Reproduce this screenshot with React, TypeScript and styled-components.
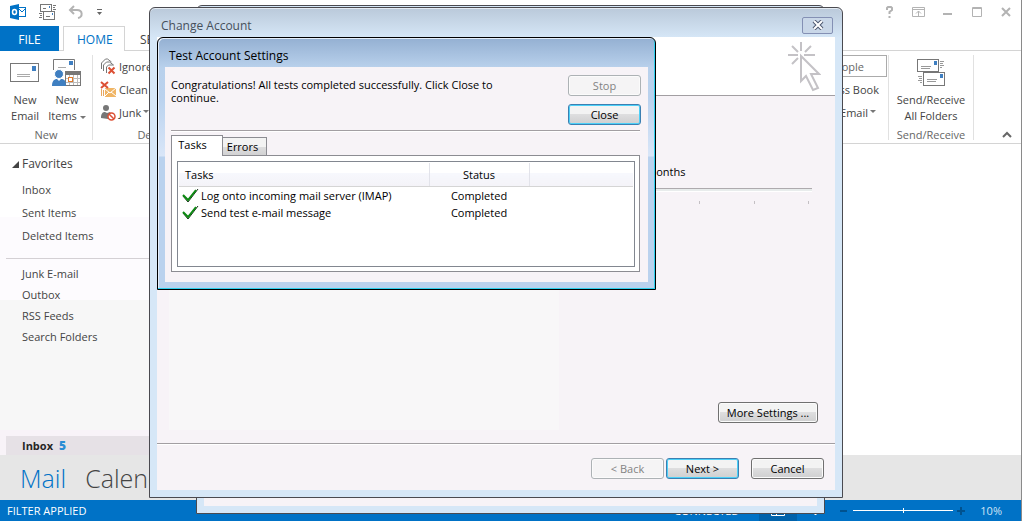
import React from "react";
import styled, { createGlobalStyle, css } from "styled-components";

const BLUE = "#0072c6";
const INK = "#444444";

const Global = createGlobalStyle`
  *, *::before, *::after { box-sizing: border-box; }
  body { margin: 0; background: #fff; }
  body, button, input, table { font-family: "Open Sans", "Noto Sans", sans-serif; font-size: 11px; color: ${INK}; }
  button { padding: 0; border: 0; background: none; }
  svg { display: block; flex: none; }
`;

/* ---------- main window ---------- */
const Page = styled.div`
  position: relative;
  display: flex;
  flex-direction: column;
  min-height: 100vh;
  overflow: hidden;
  background: #fff;
  border-right: 1px solid #8a8a8a;
`;
const TitleBar = styled.header`
  display: flex;
  justify-content: space-between;
  height: 26px;
  padding: 0 8px 2px 9px;
`;
const QuickTools = styled.div`
  display: flex;
  align-items: center;
  gap: 12px;
`;
const WindowTools = styled(QuickTools)`
  gap: 14px;
`;
const IconButton = styled.button`
  display: flex;
  align-items: center;
  justify-content: center;
`;
const Tabs = styled.nav`
  display: flex;
  height: 25px;
  border-bottom: 1px solid #d4d4d4;
`;
const Tab = styled.button<{ $kind?: "file" | "active" }>`
  height: 25px;
  padding: 0 13px;
  font-size: 12px;
  white-space: nowrap;
  border: 1px solid transparent;
  border-bottom: 0;
  ${(p) => p.$kind === "file" && css`
    width: 59px;
    margin-right: 4px;
    color: #fff;
    background: ${BLUE};
  `}
  ${(p) => p.$kind === "active" && css`
    width: 62px;
    margin-right: 1px;
    color: ${BLUE};
    background: #fff;
    border-color: #d4d4d4;
  `}
`;
const Ribbon = styled.div`
  display: flex;
  height: 93px;
  padding: 4px 0 3px;
  border-bottom: 1px solid #d4d4d4;
`;
const Group = styled.section<{ $width: number }>`
  display: flex;
  flex-direction: column;
  justify-content: space-between;
  width: ${(p) => p.$width}px;
  border-right: 1px solid #e1e1e1;
`;
const GroupBody = styled.div`
  display: flex;
  padding: 0 4px;
`;
const GroupName = styled.div`
  line-height: 10px;
  text-align: center;
  color: #666;
`;
const BigButton = styled.button`
  display: flex;
  flex-direction: column;
  align-items: center;
  flex: 1;
  gap: 2px;
  line-height: 16px;
  white-space: nowrap;
  padding-top: 3px;
`;
const SmallStack = styled.div<{ $right?: boolean }>`
  display: flex;
  flex-direction: column;
  align-items: ${(p) => (p.$right ? "flex-end" : "flex-start")};
  flex: 1;
  gap: 1px;
  padding: 0 ${(p) => (p.$right ? 8 : 3)}px;
`;
const SmallButton = styled.button`
  display: flex;
  align-items: center;
  gap: 2px;
  height: 22px;
  white-space: nowrap;
`;
const EmailButton = styled(SmallButton)`
  margin-right: 3px;
`;
const SearchBox = styled.input`
  width: 116px;
  height: 22px;
  margin-right: -8px;
  padding: 0 22px 0 4px;
  text-align: right;
  color: #666;
  border: 1px solid #ababab;
  &::placeholder { color: #666; }
`;
const Spacer = styled.div`
  flex: 1;
`;
const RibbonEnd = styled.div`
  display: flex;
  align-items: flex-end;
  justify-content: flex-end;
  width: 47px;
  padding: 0 9px 2px 0;
`;
const Main = styled.main`
  display: flex;
  flex: 1;
`;
const Sidebar = styled.aside`
  display: flex;
  flex-direction: column;
  width: 190px;
  background: linear-gradient(#fff 73px, #fdfbfe 73px, #fdfbfe 156px, #f7f7f7 156px, #f7f7f7 286px, #f8f3f8 286px);
`;
const Favorites = styled.h2`
  display: flex;
  align-items: center;
  gap: 3px;
  margin: 0;
  padding: 10px 12px 4px;
  font-size: 12px;
  line-height: 20px;
  font-weight: 400;
`;
const Folders = styled.ul<{ $row: number }>`
  margin: 0;
  padding: 0 0 0 22px;
  list-style: none;
  line-height: ${(p) => p.$row}px;
`;
const FolderLink = styled.a`
  color: ${INK};
  text-decoration: none;
`;
const Rule = styled.hr`
  width: auto;
  margin: 11px 0 4px 6px;
  border: 0;
  border-top: 1px solid #d4d0d4;
`;
const Selected = styled.a`
  display: flex;
  gap: 6px;
  margin: auto 0 0 6px;
  padding-left: 16px;
  line-height: 19px;
  font-weight: 700;
  color: #262626;
  background: #e6e1e6;
  text-decoration: none;
  b { color: #2a8dd4; font-size: 12px; }
`;
const Modules = styled.nav`
  display: flex;
  gap: 19px;
  height: 45px;
  padding-left: 20px;
  background: #e6e6e6;
`;
const Module = styled.a<{ $on?: boolean }>`
  font-size: 25px;
  line-height: 47px;
  font-weight: 300;
  color: ${(p) => (p.$on ? BLUE : INK)};
  text-decoration: none;
`;
const StatusBar = styled.footer`
  display: flex;
  align-items: center;
  height: 21px;
  padding: 0 19px 0 7px;
  color: #fff;
  background: ${BLUE};
`;
const StatusView = styled.button<{ $on?: boolean }>`
  display: flex;
  align-items: center;
  justify-content: center;
  width: 38px;
  height: 21px;
  background: ${(p) => (p.$on ? "#0062ab" : "transparent")};
`;
const Connected = styled.span`
  margin-right: 20px;
`;
const Percent = styled.span`
  margin-left: 14px;
  color: #cfe4f5;
`;
const ZoomRange = styled.input`
  appearance: none;
  width: 100px;
  height: 9px;
  margin: 0 4px;
  background: linear-gradient(#fff, #fff) center / 100% 1px no-repeat;
  &::-webkit-slider-thumb { appearance: none; width: 1px; height: 5px; background: #fff; }
`;

/* ---------- dialogs ---------- */
const BackWindow = styled.div`
  position: absolute;
  top: 5px;
  bottom: 7px;
  left: 196px;
  right: 196px;
  border: 1px solid #4a4a50;
  border-radius: 6px 6px 0 0;
  background: #f7f3f7;
  box-shadow: inset 0 0 0 7px #d6e7f7;
`;
const AccountWindow = styled.section`
  position: absolute;
  top: 7px;
  bottom: 23px;
  left: 149px;
  right: 178px;
  display: flex;
  flex-direction: column;
  padding: 0 7px 7px;
  border: 1px solid #4a4a50;
  border-radius: 6px 6px 0 0;
  background: linear-gradient(#bac9da, #d6e7f7 30px);
  box-shadow: inset 0 1px 0 #e4ebf3;
`;
const AccountTitle = styled.header`
  display: flex;
  align-items: center;
  justify-content: space-between;
  height: 29px;
  padding: 6px 2px 0 4px;
  font-size: 12px;
  color: #46505c;
`;
const CloseX = styled.button`
  display: flex;
  align-items: center;
  justify-content: center;
  width: 31px;
  height: 17px;
  border: 1px solid #8490b4;
  border-radius: 2px;
  background: #c9d7e8;
  margin-bottom: 1px;
`;
const AccountBody = styled.div`
  display: flex;
  flex-direction: column;
  flex: 1;
  background: #f7f3f7;
`;
const Banner = styled.div`
  display: flex;
  justify-content: flex-end;
  height: 59px;
  padding: 5px 14px 0 0;
  background: #fff;
  border-bottom: 1px solid #a29ea2;
`;
const Settings = styled.div`
  display: flex;
  flex: 1;
`;
const Shade = styled.div`
  width: 390px;
  margin: 180px 0 13px 12px;
  background: #f8f7f8;
`;
const Options = styled.div`
  display: flex;
  flex-direction: column;
  flex: 1;
  padding: 67px 17px 20px 0;
  color: #000;
`;
const Months = styled.label`
  display: flex;
  padding-left: 87px;
  line-height: 18px;
`;
const MailRange = styled.input`
  appearance: none;
  height: 4px;
  margin: 7px 6px 0 0;
  background: #e8ecec;
  border-top: 1px solid #aeaaae;
  border-bottom: 1px solid #fff;
  &::-webkit-slider-thumb { appearance: none; width: 9px; height: 4px; background: #ccc; }
`;
const Ticks = styled.div`
  display: flex;
  justify-content: space-between;
  margin: 9px 9px 0 86px;
  i { width: 1px; height: 3px; background: #c4c0c4; }
`;
const Footer = styled.footer`
  display: flex;
  align-items: flex-start;
  justify-content: flex-end;
  height: 47px;
  padding: 14px 11px 0 0;
  border-top: 1px solid #a29ea2;
  box-shadow: inset 0 1px 0 #fff;
`;
const PushButton = styled.button<{ $width?: number; $primary?: boolean; $gap?: number }>`
  width: ${(p) => p.$width ?? 73}px;
  height: 21px;
  margin-left: ${(p) => p.$gap ?? 0}px;
  color: #000;
  line-height: 18px;
  white-space: nowrap;
  border: 1px solid #707070;
  border-radius: 3px;
  background: linear-gradient(#f3f3f3 48%, #dededf 50%, #cfcfd0);
  box-shadow: inset 0 0 0 1px #fbfbfb;
  ${(p) => p.$primary && css`
    border-color: #3c7fb1;
    box-shadow: inset 0 0 0 1px #4cd0f8;
  `}
  &:disabled {
    color: #838383;
    border-color: #adb2b5;
    background: #f5f4f5;
  }
`;
const MoreButton = styled(PushButton)`
  align-self: flex-end;
  margin-top: auto;
`;
const TestWindow = styled.section`
  position: absolute;
  top: 37px;
  left: 157px;
  width: 499px;
  padding: 0 7px 7px;
  color: #000;
  border: 1px solid #000;
  border-radius: 6px 6px 0 0;
  background: linear-gradient(#94b0d2, #b9d1ec 30px, #bad2ee 60px, #d9e6f8 118px, #bad2ee 119px);
  box-shadow: inset -1px -1px 0 #2fd0ee, inset 1px 1px 0 #e4eefa;
`;
const TestTitle = styled.header`
  height: 29px;
  padding: 9px 4px 0;
  font-size: 12px;
  line-height: 18px;
`;
const TestBody = styled.div`
  display: flex;
  flex-direction: column;
  padding: 8px 8px 10px 6px;
  background: #f7f3f7;
`;
const Notice = styled.div`
  display: flex;
  justify-content: space-between;
  padding-bottom: 5px;
  border-bottom: 1px solid #a29ea2;
  box-shadow: 0 1px 0 #fff;
`;
const Message = styled.p`
  width: 350px;
  margin: 3px 0 0;
  line-height: 13px;
`;
const ButtonColumn = styled.div`
  display: flex;
  flex-direction: column;
  gap: 8px;
  margin-right: -1px;
`;
const PageTabs = styled.div`
  display: flex;
  align-items: flex-end;
  height: 21px;
  margin-top: 3px;
`;
const PageTab = styled.button<{ $on?: boolean }>`
  height: ${(p) => (p.$on ? 21 : 18)}px;
  width: ${(p) => (p.$on ? 52 : 44)}px;
  padding-right: 4px;
  color: #000;
  line-height: 18px;
  border: 1px solid #8c8c92;
  border-bottom: 0;
  background: linear-gradient(#f3f3f3 50%, #dededf 50%, #d2d2d3);
  border-left-width: 0;
  ${(p) => p.$on && css`
    position: relative;
    margin-bottom: -1px;
    padding: 0 9px 2px 0;
    border-left-width: 1px;
    background: #fff;
  `}
`;
const TabPanel = styled.div`
  padding: 5px 4px 4px;
  border: 1px solid #8c8c92;
  background: #fff;
`;
const ListBox = styled.div`
  min-height: 106px;
  margin-left: 1px;
  padding: 1px;
  border: 1px solid #828790;
`;
const TaskTable = styled.table`
  width: 100%;
  border-collapse: collapse;
  table-layout: fixed;
  color: #000;
  th {
    height: 23px;
    padding: 0;
    font-weight: 400;
    border-right: 1px solid #e2e3ea;
    border-bottom: 1px solid #d5d5d5;
    background: linear-gradient(#fff 45%, #f7f8fd 45%, #f4f3f8);
  }
  th:first-child { text-align: left; padding-left: 6px; width: 250px; }
  th:nth-child(2) { width: 100px; }
  th:last-child { border-right: 0; }
  td { height: 17px; padding: 0; text-align: center; line-height: 17px; }
`;
const Task = styled.div`
  display: flex;
  align-items: center;
  gap: 2px;
  padding-left: 3px;
  white-space: nowrap;
`;

/* ---------- drawings ---------- */
const CaretSvg = styled.svg`
  display: inline-block;
`;
const Caret = () => (
  <CaretSvg width="6" height="4" viewBox="0 0 6 4"><path d="M0 0h6L3 3z" fill="#777" /></CaretSvg>
);
const Envelope = () => (
  <svg width="30" height="32" viewBox="0 0 30 32">
    <rect x=".5" y="5.500" width="28" height="18" fill="#fff" stroke="#777" />
    <rect x="22" y="8" width="4" height="5" fill="#3f7fc1" />
    <path d="M7 16.500h13M7 18.500h13" stroke="#aaa" />
  </svg>
);
const NewItemsIcon = () => (
  <svg width="30" height="32" viewBox="0 0 30 32">
    <path d="M1.500 12V1.500h21V12" fill="#fff" stroke="#777" />
    <rect x="17" y="3" width="4" height="4" fill="#3f7fc1" />
    <path d="M6 9.500h8" stroke="#aaa" />
    <rect x="13.500" y="13.500" width="15" height="14" fill="#fff" stroke="#777" />
    <path d="M13 13h16v4H13z" fill="#777" />
    <path d="M17.500 17v10M21.500 17v10M25.500 17v10M14 20.500h14M14 24.500h14" stroke="#bbb" />
    <rect x="16.500" y="19.500" width="4" height="4" fill="#fff" stroke="#e07a2c" />
    <circle cx="7" cy="16" r="4.500" fill="#3f7fc1" stroke="#fff" />
    <path d="M0 28c0-6 3-7 5-7l2 2 2-2c3 0 5 1 5 7z" fill="#3f7fc1" />
  </svg>
);
const SendReceiveIcon = () => (
  <svg width="30" height="32" viewBox="0 0 30 32">
    <rect x="1.500" y="1.500" width="21" height="12" fill="#fff" stroke="#777" />
    <rect x="18" y="3" width="3" height="4" fill="#3f7fc1" />
    <path d="M5 8.500h10M5 10.500h9M24 3.500h4M24 5.500h3M24 7.500h4M24 9.500h2M2 18.500h4M3 20.500h3M2 22.500h4M4 24.500h2" stroke="#999" />
    <rect x="7.500" y="14.500" width="21" height="13" fill="#fff" stroke="#777" />
    <rect x="24" y="16" width="3" height="4" fill="#3f7fc1" />
    <path d="M11 21.500h10M11 23.500h9" stroke="#999" />
  </svg>
);
const OutlookLogo = () => (
  <svg width="18" height="18" viewBox="0 0 18 18">
    <rect x="8.500" y="4.500" width="8" height="9" fill="#fff" stroke="#0072c6" />
    <path d="M9 5l4 4 4-4" fill="none" stroke="#0072c6" />
    <path d="M1 3l9-2v16l-9-2z" fill="#0072c6" />
    <ellipse cx="5.500" cy="9" rx="2" ry="2.500" fill="none" stroke="#fff" strokeWidth="1.500" />
  </svg>
);
const QuickSendIcon = () => (
  <svg width="17" height="17" viewBox="0 0 17 17" fill="#fff" stroke="#777">
    <rect x="1.500" y=".5" width="11" height="7" />
    <path d="M4 4.500h3M14 1.500h3M14 3.500h2M14 5.500h3M0 9.500h3M1 11.500h2M0 13.500h3" />
    <rect x="4.500" y="7.500" width="11" height="8" />
    <path d="M7 12.500h4" />
    <path d="M10 3h1M13 10h1" stroke="#3f7fc1" strokeWidth="2" />
  </svg>
);
const UndoIcon = () => (
  <svg width="16" height="14" viewBox="0 0 16 14" fill="none" stroke="#b3b3b3" strokeWidth="2">
    <path d="M6 1L2 5L6 9M2 5h7c6 0 6 7 1 8" />
  </svg>
);
const IgnoreIcon = () => (
  <svg width="17" height="17" viewBox="0 0 17 17" fill="none" stroke="#777">
    <path d="M1.500 11V5l4-4h2l4 3M3.500 13V7l3-3h3l4 3M6.500 15V9l2-2h5" />
    <path d="M8.500 9.500l6 6M14.500 9.500l-6 6" stroke="#dc5034" strokeWidth="2" />
  </svg>
);
const CleanIcon = () => (
  <svg width="17" height="17" viewBox="0 0 17 17" fill="none">
    <path d="M1.500 8v7M3.500 9v6" stroke="#e7a760" />
    <path d="M5 7h11v9H5z" fill="#f0b565" />
    <path d="M5 8l5 4 6-5M5 15l4-4M16 15l-5-4" stroke="#fff" />
    <path d="M1 1l7 6M8 1L1 7" stroke="#dc5034" strokeWidth="2" />
  </svg>
);
const JunkIcon = () => (
  <svg width="17" height="17" viewBox="0 0 17 17">
    <circle cx="6" cy="4" r="3" fill="#777" />
    <path d="M1 14c0-5 2-6 4-6l2 1 3-1 2 3-4 4z" fill="#777" />
    <circle cx="11.500" cy="12.500" r="3.500" fill="#fff" stroke="#dc5034" strokeWidth="1.500" />
    <path d="M9 10l5 5" stroke="#dc5034" strokeWidth="1.500" />
  </svg>
);
const ClickPointer = () => (
  <svg width="34" height="50" viewBox="0 0 34 50" fill="none" stroke="#c4c2c6" strokeWidth="2">
    <path d="M14 0v9M1 13h10M17 13h11M5 4l6 6M24 4l-6 6M5 22l6-6" />
    <path d="M14 14v25l5-5 7 14 5-2-7-14h8z" fill="#fff" />
  </svg>
);
const Check = () => (
  <svg width="17" height="15" viewBox="0 0 17 15">
    <path d="M1 8l5 6L16 1" fill="none" stroke="#1b2b1b" />
    <path d="M1 7l5 5L14 2" fill="none" stroke="#0c8a12" strokeWidth="2" />
  </svg>
);

const tasks = ["Log onto incoming mail server (IMAP)", "Send test e-mail message"];

export default function App() {
  return (
    <>
      <Global />
      <Page>
        <TitleBar>
          <QuickTools>
            <OutlookLogo />
            <IconButton aria-label="Send and receive"><QuickSendIcon /></IconButton>
            <IconButton aria-label="Undo"><UndoIcon /></IconButton>
            <IconButton aria-label="Customize toolbar">
              <svg width="7" height="6" viewBox="0 0 7 6"><path d="M1 0h5v1H1zM1 3h5L3.500 6z" fill="#666" /></svg>
            </IconButton>
          </QuickTools>
          <WindowTools>
            <IconButton aria-label="Help">
              <svg width="15" height="14" viewBox="0 0 15 14" fill="none" stroke="#b3b3b3" strokeWidth="2">
                <path d="M5 5V3l1-1h3l1 1v2L7.500 7v2M7.500 11v2" />
              </svg>
            </IconButton>
            <IconButton aria-label="Ribbon display options">
              <svg width="15" height="14" viewBox="0 0 15 14" fill="none" stroke="#b3b3b3">
                <path d="M1.500 2.500h12v9h-12zM1 4.500h13M7.500 11V6M5 8.500L7.500 6L10 8.500" />
              </svg>
            </IconButton>
            <IconButton aria-label="Minimize">
              <svg width="15" height="14" viewBox="0 0 15 14"><path d="M3 8h9v2H3z" fill="#b3b3b3" /></svg>
            </IconButton>
            <IconButton aria-label="Maximize">
              <svg width="15" height="14" viewBox="0 0 15 14" fill="none" stroke="#b3b3b3">
                <path d="M3.500 2.500h9v9h-9zM3 3.500h10" />
              </svg>
            </IconButton>
            <IconButton aria-label="Close">
              <svg width="15" height="14" viewBox="0 0 15 14" fill="none" stroke="#b3b3b3" strokeWidth="2">
                <path d="M4 3l8 8M12 3l-8 8" />
              </svg>
            </IconButton>
          </WindowTools>
        </TitleBar>
        <Tabs>
          <Tab $kind="file">FILE</Tab>
          <Tab $kind="active">HOME</Tab>
          <Tab>SEND / RECEIVE</Tab>
        </Tabs>
        <Ribbon>
          <Group $width={93}>
            <GroupBody>
              <BigButton><Envelope /><span>New<br />Email</span></BigButton>
              <BigButton><NewItemsIcon /><span>New<br />Items <Caret /></span></BigButton>
            </GroupBody>
            <GroupName>New</GroupName>
          </Group>
          <Group $width={123}>
            <GroupBody>
              <SmallStack>
                <SmallButton><IgnoreIcon />Ignore</SmallButton>
                <SmallButton><CleanIcon />Clean Up</SmallButton>
                <SmallButton><JunkIcon />Junk <Caret /></SmallButton>
              </SmallStack>
            </GroupBody>
            <GroupName>Delete</GroupName>
          </Group>
          <Spacer />
          <Group $width={130}>
            <GroupBody>
              <SmallStack $right>
                <SearchBox aria-label="Search People" placeholder="Search People" />
                <SmallButton>Address Book</SmallButton>
                <EmailButton>Filter Email <Caret /></EmailButton>
              </SmallStack>
            </GroupBody>
            <GroupName>Find</GroupName>
          </Group>
          <Group $width={85}>
            <GroupBody>
              <BigButton><SendReceiveIcon /><span>Send/Receive<br />All Folders</span></BigButton>
            </GroupBody>
            <GroupName>Send/Receive</GroupName>
          </Group>
          <RibbonEnd>
            <IconButton aria-label="Collapse the ribbon">
              <svg width="10" height="7" viewBox="0 0 10 7"><path d="M1 6l4-4 4 4" fill="none" stroke="#666" strokeWidth="2" /></svg>
            </IconButton>
          </RibbonEnd>
        </Ribbon>
        <Main>
          <Sidebar>
            <Favorites>
              <svg width="7" height="7" viewBox="0 0 7 7"><path d="M7 0v7H0z" fill="#444" /></svg>
              Favorites
            </Favorites>
            <Folders $row={23}>
              {["Inbox", "Sent Items", "Deleted Items"].map((f) => <li key={f}><FolderLink href="#">{f}</FolderLink></li>)}
            </Folders>
            <Rule />
            <Folders $row={21}>
              {["Junk E-mail", "Outbox", "RSS Feeds", "Search Folders"].map((f) => <li key={f}><FolderLink href="#">{f}</FolderLink></li>)}
            </Folders>
            <Selected href="#">Inbox <b>5</b></Selected>
          </Sidebar>
        </Main>
        <Modules>
          <Module href="#" $on>Mail</Module>
          <Module href="#">Calendar</Module>
        </Modules>
        <StatusBar>
          <span>FILTER APPLIED</span>
          <Spacer />
          <Connected>CONNECTED</Connected>
          <StatusView $on aria-label="Normal view">
            <svg width="14" height="11" viewBox="0 0 14 11" fill="none" stroke="#fff"><path d="M.5.5h13v10H.5zM5.500 1v9" /></svg>
          </StatusView>
          <StatusView aria-label="Reading view">
            <svg width="14" height="11" viewBox="0 0 14 11" fill="none" stroke="#fff"><path d="M.5 1v7h4l2 2 2-2h5V1M6.500 2v8" /></svg>
          </StatusView>
          <svg width="14" height="9" viewBox="0 0 14 9"><path d="M5 4h7v2H5z" fill="#00528f" /></svg>
          <ZoomRange type="range" aria-label="Zoom" defaultValue={50} />
          <svg width="9" height="9" viewBox="0 0 9 9"><path d="M0 4h8v2H0zM3 1h2v8H3z" fill="#00528f" /></svg>
          <Percent>10%</Percent>
        </StatusBar>

        <BackWindow />
        <AccountWindow aria-label="Change Account">
          <AccountTitle>
            Change Account
            <CloseX aria-label="Close">
              <svg width="12" height="10" viewBox="0 0 12 10" fill="none">
                <path d="M2 1l8 8M10 1L2 9" stroke="#4e5870" strokeWidth="4" />
                <path d="M2 1l8 8M10 1L2 9" stroke="#fff" strokeWidth="2" />
              </svg>
            </CloseX>
          </AccountTitle>
          <AccountBody>
            <Banner><ClickPointer /></Banner>
            <Settings>
              <Shade />
              <Options>
                <Months htmlFor="keep">months</Months>
                <MailRange id="keep" type="range" defaultValue={0} />
                <Ticks><i /><i /><i /><i /></Ticks>
                <MoreButton $width={100}>More Settings ...</MoreButton>
              </Options>
            </Settings>
            <Footer>
              <PushButton disabled>&lt; Back</PushButton>
              <PushButton $primary $gap={2}>Next &gt;</PushButton>
              <PushButton $gap={12}>Cancel</PushButton>
            </Footer>
          </AccountBody>
        </AccountWindow>

        <TestWindow aria-label="Test Account Settings">
          <TestTitle>Test Account Settings</TestTitle>
          <TestBody>
            <Notice>
              <Message>Congratulations! All tests completed successfully. Click Close to continue.</Message>
              <ButtonColumn>
                <PushButton disabled>Stop</PushButton>
                <PushButton $primary>Close</PushButton>
              </ButtonColumn>
            </Notice>
            <PageTabs>
              <PageTab $on>Tasks</PageTab>
              <PageTab>Errors</PageTab>
            </PageTabs>
            <TabPanel>
              <ListBox>
                <TaskTable>
                  <thead><tr><th>Tasks</th><th>Status</th><th aria-label="Details" /></tr></thead>
                  <tbody>
                    {tasks.map((t) => (
                      <tr key={t}><td><Task><Check />{t}</Task></td><td>Completed</td><td /></tr>
                    ))}
                  </tbody>
                </TaskTable>
              </ListBox>
            </TabPanel>
          </TestBody>
        </TestWindow>
      </Page>
    </>
  );
}
